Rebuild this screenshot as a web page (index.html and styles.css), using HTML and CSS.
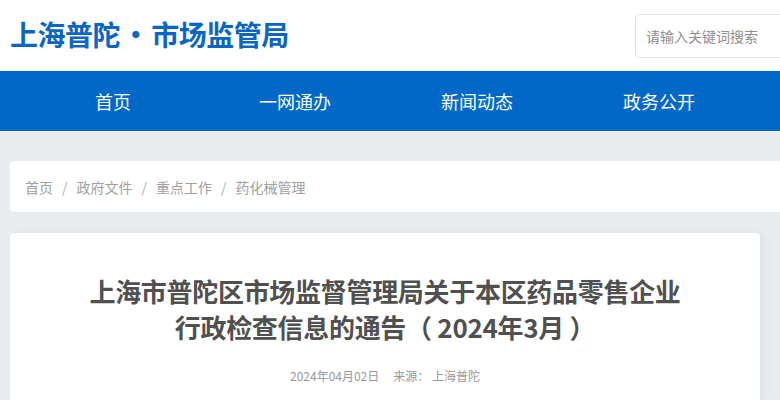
FILE: index.html
```html
<!DOCTYPE html>
<html lang="zh-CN">
<head>
    <meta charset="UTF-8">
    <meta name="viewport" content="width=device-width, initial-scale=1.0">
    <title>上海普陀 • 市场监管局</title>
    <link rel="stylesheet" href="styles.css">
</head>
<body>
    <header class="top">
        <h1 class="logo">上海普陀 • 市场监管局</h1>
        <div class="search">
            <input type="text" placeholder="请输入关键词搜索">
        </div>
    </header>

    <nav class="nav">
        <a href="#">首页</a>
        <a href="#">一网通办</a>
        <a href="#">新闻动态</a>
        <a href="#">政务公开</a>
    </nav>

    <main class="main">
        <div class="crumbs">
            <a href="#">首页</a><span>/</span>
            <a href="#">政府文件</a><span>/</span>
            <a href="#">重点工作</a><span>/</span>
            <a href="#">药化械管理</a>
        </div>

        <article class="article">
            <h2>上海市普陀区市场监督管理局关于本区药品零售企业<br>行政检查信息的通告（ 2024年3月 ）</h2>
            <p class="meta">2024年04月02日<span class="gap"></span>来源： 上海普陀</p>
        </article>
    </main>
</body>
</html>
```

FILE: styles.css
```css
body{
    margin: 0;
    font-family: "Noto Sans CJK SC", "Noto Sans", sans-serif;
    background-color: #e9edf0;
    overflow: hidden;
}

.top{
    background-color: #fff;
    height: 71px;
    display: flex;
    justify-content: space-between;
    align-items: center;
}
.logo{
    margin: 0 0 4px 10px;
    font-size: 28px;
    font-weight: bold;
    color: #0a66c2;
    letter-spacing: -0.5px;
    word-spacing: -4px;
}
.search{
    width: 160px;
    margin-right: -15px;
}
.search input{
    display: block;
    width: 100%;
    height: 44px;
    box-sizing: border-box;
    border: 1px solid #e2e2e2;
    border-radius: 4px;
    padding: 0 10px;
    font-family: inherit;
    font-size: 14px;
    color: #333;
    outline: none;
}
.search input::placeholder{
    color: #8f8f8f;
}

.nav{
    background-color: #0069c7;
    height: 60px;
    display: grid;
    grid-template-columns: repeat(4, 182px);
    padding-left: 22px;
    align-items: center;
}
.nav a{
    color: #fff;
    text-decoration: none;
    font-size: 18px;
    text-align: center;
}

.main{
    padding: 30px 0 0 10px;
}
.crumbs{
    background-color: #fff;
    border-radius: 4px 0 0 4px;
    height: 51px;
    display: flex;
    align-items: center;
    padding-left: 15px;
    font-size: 14px;
    color: #b0b0b0;
}
.crumbs a{
    color: #a0a0a0;
    text-decoration: none;
}
.crumbs span{
    margin: 0 9px;
}

.article{
    margin-top: 21px;
    width: 750px;
    background-color: #fff;
    border-radius: 4px;
    box-shadow: 4px 0 10px rgba(0, 0, 0, 0.05);
    padding-top: 40px;
    height: 130px;
    text-align: center;
}
.article h2{
    margin: 0;
    font-size: 26px;
    line-height: 36px;
    font-weight: bold;
    color: #505050;
    letter-spacing: -0.3px;
}
.meta{
    margin: 22px 0 0;
    font-size: 12px;
    color: #999;
}
.gap{
    display: inline-block;
    width: 14px;
}
```
